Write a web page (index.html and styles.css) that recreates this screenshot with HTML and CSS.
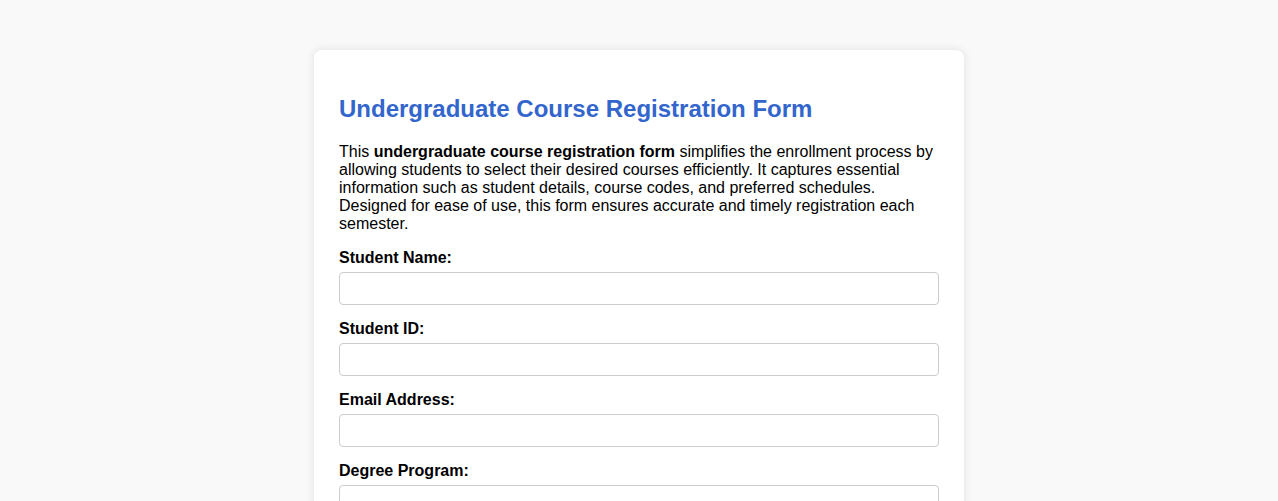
FILE: index.html
```html
<!DOCTYPE html>
<html lang="en">
<head>
<meta charset="utf-8">
<title>Undergraduate Course Registration Form</title>
<link rel="stylesheet" href="styles.css">
</head>
<body>
<div class="container">
  <h1 class="title">Undergraduate Course Registration Form</h1>
  <p class="intro">This <strong>undergraduate course registration form</strong> simplifies the enrollment process by allowing students to select their desired courses efficiently. It captures essential information such as student details, course codes, and preferred schedules. Designed for ease of use, this form ensures accurate and timely registration each semester.</p>
  <form class="form">
    <label class="label" for="name">Student Name:</label>
    <input class="input" type="text" id="name">
    <label class="label" for="sid">Student ID:</label>
    <input class="input" type="text" id="sid">
    <label class="label" for="email">Email Address:</label>
    <input class="input" type="email" id="email">
    <label class="label" for="degree">Degree Program:</label>
    <input class="input" type="text" id="degree">
    <label class="label" for="codes">Course Codes:</label>
    <input class="input" type="text" id="codes">
  </form>
</div>
</body>
</html>
```
FILE: styles.css
```css
html, body {
  margin: 0;
  padding: 0;
}
body {
  background: #f9f9f9;
  font-family: "Liberation Sans", Arial, sans-serif;
  font-size: 16px;
  color: #000;
}
.container {
  max-width: 600px;
  margin: 50px auto;
  padding: 25px;
  background: #fff;
  border-radius: 8px;
  box-shadow: 0 0 10px rgba(0, 0, 0, 0.1);
}
.title {
  color: #3366cc;
  font-size: 24px;
  margin: 20px 0 20px;
}
.intro {
  margin: 0 0 16px;
  line-height: 18px;
}
.form {
  display: block;
}
.label {
  display: block;
  font-weight: bold;
  margin-bottom: 5px;
}
.input {
  display: block;
  width: 100%;
  box-sizing: border-box;
  padding: 8px;
  margin: 0 0 15px;
  border: 1px solid #ccc;
  border-radius: 4px;
  font-family: inherit;
  font-size: 13.333px;
}
```
